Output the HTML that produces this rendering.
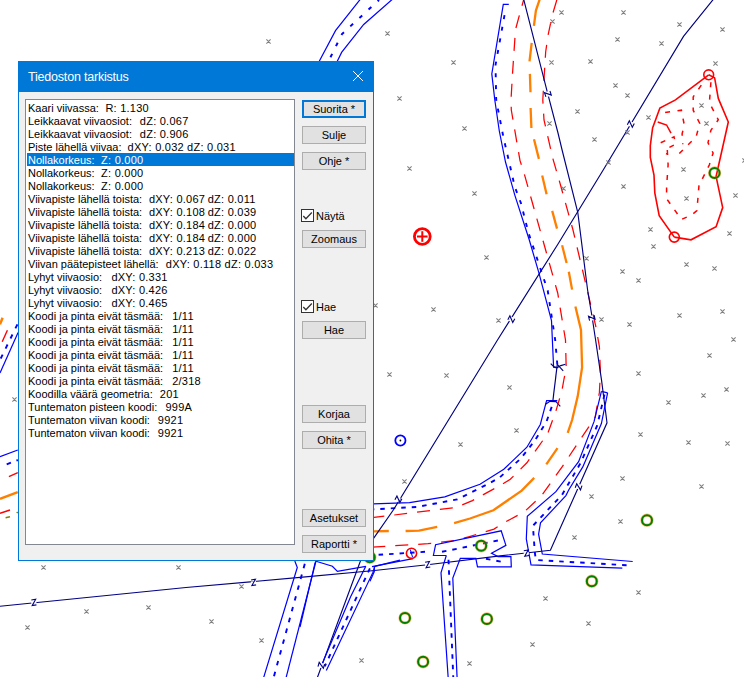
<!DOCTYPE html>
<html><head><meta charset="utf-8">
<style>
html,body{margin:0;padding:0;width:744px;height:677px;overflow:hidden;background:#fff;}
body{position:relative;font-family:"Liberation Sans",sans-serif;}
#map{position:absolute;left:0;top:0;}
.dlg{position:absolute;left:18px;top:61px;width:354px;height:498px;border:1px solid #0078d7;background:#f0f0f0;}
.tb{position:absolute;left:0;top:0;width:354px;height:30px;background:#0078d7;}
.tt{position:absolute;left:9px;top:8px;color:#fff;font-size:12.5px;letter-spacing:-0.2px;white-space:pre;}
.lb{position:absolute;left:6px;top:37px;width:268px;height:444px;border:1px solid #828790;background:#fff;}
.row{position:absolute;left:1px;height:13px;width:266px;font-size:11px;line-height:13px;white-space:pre;color:#000;}
.row span{position:absolute;top:1px;margin-left:1px;}
.row span+span{letter-spacing:.25px;}
.sel{background:#0078d7;color:#fff;width:267px;}
.btn{position:absolute;left:283px;width:62px;height:16px;border:1px solid #adadad;background:#e1e1e1;font-size:11px;line-height:16px;text-align:center;color:#000;white-space:pre;}
.btn.def{border:2px solid #0078d7;width:60px;height:14px;line-height:14px;}
.cb{position:absolute;left:282px;width:11px;height:11px;border:1px solid #333;background:#fff;}
.cbl{position:absolute;left:297px;font-size:11px;line-height:13px;color:#000;}
</style></head><body>
<svg id="map" width="744" height="677" viewBox="0 0 744 677">
<path d="M361.3 -2.0 L335.5 30.6 L319.4 61.0 L300.0 100.0" stroke="#0000ff" stroke-width="1.2" fill="none"/>
<path d="M392.7 -1.0 L363.7 24.5 L341.6 52.4 L337.4 61.0 L330.0 80.0" stroke="#0000ff" stroke-width="1.2" fill="none"/>
<path d="M379.0 0.0 L342.0 34.0 L330.6 57.0 L320.0 80.0" stroke="#0000ff" stroke-width="2" fill="none" stroke-dasharray="3.8 8.6" stroke-dashoffset="2"/>
<path d="M18.1 332.5 L0.0 373.0" stroke="#0000ff" stroke-width="1.2" fill="none"/>
<path d="M17.4 324.4 L0.0 360.0" stroke="#0000ff" stroke-width="1.9" fill="none" stroke-dasharray="4.5 6.7"/>
<path d="M7.4 330.3 L2.2 341.7" stroke="#ff0000" stroke-width="1.4" fill="none"/>
<path d="M2.6 317.7 L0.0 324.4" stroke="#ff8000" stroke-width="2.5" fill="none"/>
<path d="M508.8 4.4 L503.3 4.4 L491.8 73.9 L494.8 100.0 L499.3 131.0 L505.5 162.0 L514.8 195.1 L529.3 240.0 L538.9 272.9 L551.5 320.6 L553.6 367.3 L557.3 368.0" stroke="#0000ff" stroke-width="1.2" fill="none"/>
<path d="M505.0 12.5 L495.5 65.0 L496.2 100.0 L503.4 137.2 L509.6 164.1 L514.8 186.9 L521.0 203.3 L528.3 232.3 L547.7 290.5 L555.2 340.0 L557.3 364.3" stroke="#0000ff" stroke-width="1.9" fill="none" stroke-dasharray="4 7.8" stroke-dashoffset="-2.7"/>
<path d="M557.3 400.6 L546.6 400.6 L540.3 424.5 L526.9 447.2 L503.8 469.3 L480.0 484.3 L444.8 496.9 L409.6 502.7 L373.3 503.9" stroke="#0000ff" stroke-width="1.2" fill="none"/>
<path d="M551.7 406.9 L546.6 421.4 L535.2 440.0 L520.7 458.6 L500.0 477.2 L490.0 483.0 L457.3 499.4 L417.2 506.9 L372.0 509.4" stroke="#0000ff" stroke-width="1.9" fill="none" stroke-dasharray="4.5 6"/>
<path d="M557.3 364.3 L552.9 400.5" stroke="#000080" stroke-width="1.2" fill="none"/>
<path d="M550.7 363.6 L553.6 366.5 L557.3 367.6 L560.8 365.6 L565.5 364.3" stroke="#000080" stroke-width="1.1" fill="none"/>
<path d="M557.3 364.3 L563.2 370.9" stroke="#000080" stroke-width="1.1" fill="none"/>
<path d="M545.5 404.2 L550.0 401.4 L556.0 401.6 L560.3 406.4" stroke="#000080" stroke-width="1.1" fill="none"/>
<path d="M0.0 456.7 L17.8 450.0" stroke="#0000ff" stroke-width="1.2" fill="none"/>
<path d="M6.7 464.4 L17.8 460.0" stroke="#0000ff" stroke-width="1.9" fill="none" stroke-dasharray="4.5 6"/>
<path d="M8.9 476.7 L17.8 472.7" stroke="#ff0000" stroke-width="1.4" fill="none"/>
<path d="M0.0 498.9 L17.8 492.2" stroke="#ff8000" stroke-width="2.5" fill="none"/>
<path d="M0.0 513.3 L10.0 510.0" stroke="#ff0000" stroke-width="1.4" fill="none"/>
<path d="M5.6 517.8 L10.0 516.7" stroke="#808000" stroke-width="1.4" fill="none"/>
<path d="M16.7 512.0 L17.8 513.0" stroke="#808000" stroke-width="1.4" fill="none"/>
<path d="M523.6 0.0 L515.5 29.5 L512.5 73.9 L511.0 100.0 L511.3 110.0 L520.0 160.6 L523.9 172.5 L557.7 293.0 L565.5 340.0 L566.2 368.7 L564.0 379.0 L562.0 390.3 L555.9 411.0 L547.6 433.8 L537.2 448.3 L526.9 462.8 L510.3 479.3 L500.0 485.5 L472.4 500.6 L455.9 507.5 L372.0 517.7" stroke="#ff0000" stroke-width="1.25" fill="none" stroke-dasharray="13 10" stroke-dashoffset="7"/>
<path d="M556.8 0.0 L552.4 14.8 L548.0 35.5 L545.7 51.7 L544.3 73.9 L542.8 100.0 L544.0 120.0 L552.7 158.0 L560.5 185.0 L573.0 230.0 L595.7 325.9 L599.4 346.6 L600.4 372.6 L599.4 392.4 L595.2 417.2 L578.6 442.1 L562.1 466.9 L541.4 495.9 L524.5 511.6 L501.2 524.3 L494.0 529.1 L468.6 536.8 L456.0 540.4 L428.0 543.7 L376.5 546.9 L372.0 547.2" stroke="#ff0000" stroke-width="1.25" fill="none" stroke-dasharray="13 10"/>
<path d="M539.8 -1.0 L535.9 10.6 L533.9 25.8 M531.7 42.8 L529.5 61.3 M529.9 73.9 L530.5 92.3 M530.6 108.0 L531.4 128.0 M534.0 139.3 L538.9 158.9 M542.2 175.5 L546.6 194.3 M552.2 210.9 L557.0 228.6 M562.1 245.3 L566.6 263.0 M568.8 271.8 L572.1 289.6 M575.4 306.6 L581.0 329.9 L582.1 367.5 L577.7 396.3 L572.1 420.0 L567.7 432.9 M557.5 448.2 L546.3 464.4 M534.2 477.9 L521.7 490.6 L493.4 510.3 L470.0 518.5 L454.1 523.2 M437.2 526.9 L419.0 530.6 L405.6 531.0 M388.8 531.0 L374.0 531.3 L370.0 531.3" stroke="#ff8000" stroke-width="2.3" fill="none"/>
<path d="M523.6 -1.0 L547.2 91.6 L558.0 133.0 L562.1 150.0 L577.8 212.5 L587.6 290.0 L592.1 317.0 L595.6 340.0 L601.6 380.6 L607.0 422.8 L577.2 490.0 L550.4 550.2 L500.0 555.9 L427.6 564.7 L372.0 570.8 L300.0 577.4 L186.0 587.5 L0.0 606.3" stroke="#000080" stroke-width="1.15" fill="none"/>
<path d="M713.6 -1.0 L683.5 36.4 L603.2 170.0 L558.0 244.0 L497.5 340.0 L393.3 510.0 L372.0 540.6 L360.7 560.2 L317.2 678.0" stroke="#000080" stroke-width="1.15" fill="none"/>
<path d="M601.4 391.4 L607.6 392.8" stroke="#0000ff" stroke-width="1.2" fill="none"/>
<path d="M601.4 391.4 L594.1 421.4 L578.6 461.7 L555.9 491.7 L527.3 516.3 L526.3 538.9 L531.0 564.9 L622.3 568.1" stroke="#0000ff" stroke-width="1.2" fill="none"/>
<path d="M607.6 392.8 L601.4 423.5 L582.8 466.9 L568.7 490.0 L565.9 495.6 L540.5 522.9 L538.6 534.2 L542.3 554.0 L632.7 561.5" stroke="#0000ff" stroke-width="1.2" fill="none"/>
<path d="M604.5 394.5 L597.2 425.5 L580.7 462.8 L562.1 494.7 L532.9 525.8 L534.8 552.1 L535.8 560.0 L628.0 565.3" stroke="#0000ff" stroke-width="1.9" fill="none" stroke-dasharray="4.5 6"/>
<path d="M446.3 555.5 L433.4 555.5 L435.6 544.7 L501.2 530.8 L505.9 545.4 L491.5 553.3 L498.0 556.6 L510.9 556.6 L511.3 566.9 L477.5 566.9 L475.8 558.3 L460.3 558.3 L452.8 578.1 L457.1 678.0" stroke="#0000ff" stroke-width="1.2" fill="none"/>
<path d="M446.3 555.5 L441.0 572.7 L448.2 678.0" stroke="#0000ff" stroke-width="1.2" fill="none"/>
<path d="M442.0 551.8 L501.2 539.8" stroke="#0000ff" stroke-width="1.9" fill="none" stroke-dasharray="4.5 6"/>
<path d="M448.5 559.8 L453.3 678.0" stroke="#0000ff" stroke-width="1.9" fill="none" stroke-dasharray="4.5 6"/>
<path d="M486.0 558.7 L502.3 561.9" stroke="#0000ff" stroke-width="1.9" fill="none" stroke-dasharray="4.5 6"/>
<path d="M378.6 554.8 L430.0 551.5" stroke="#0000ff" stroke-width="1.9" fill="none" stroke-dasharray="4.5 6"/>
<path d="M372.0 566.6 L413.0 558.7" stroke="#0000ff" stroke-width="1.2" fill="none"/>
<path d="M374.3 566.2 L374.3 571.6 L370.0 581.3" stroke="#0000ff" stroke-width="1.2" fill="none"/>
<path d="M294.8 561.0 L297.3 567.5 L263.5 678.0" stroke="#0000ff" stroke-width="1.2" fill="none"/>
<path d="M316.0 561.0 L286.0 678.0" stroke="#0000ff" stroke-width="1.2" fill="none"/>
<path d="M304.8 563.8 L273.5 678.0" stroke="#0000ff" stroke-width="1.9" fill="none" stroke-dasharray="4.5 6.7"/>
<path d="M315.2 561.0 L332.4 566.3 L337.4 571.4 L365.8 566.3" stroke="#0000ff" stroke-width="1.2" fill="none"/>
<path d="M365.8 566.3 L350.6 596.7 L322.3 663.5" stroke="#0000ff" stroke-width="1.2" fill="none"/>
<path d="M374.9 566.3 L372.9 572.4 L326.3 670.6" stroke="#0000ff" stroke-width="1.2" fill="none"/>
<path d="M369.9 568.3 L324.8 666.3" stroke="#0000ff" stroke-width="1.9" fill="none" stroke-dasharray="4.5 6"/>
<path d="M374.9 566.3 L400.0 560.2" stroke="#0000ff" stroke-width="1.2" fill="none"/>
<path d="M315.2 562.3 L300.0 627.0" stroke="#0000ff" stroke-width="1.2" fill="none"/>
<path d="M708.7 74.8 L675.5 99.9 L659.9 108.0 L652.6 128.0 L650.3 145.7 L650.3 157.4 L654.0 175.1 L654.8 192.8 L659.2 215.7 L674.3 237.1" stroke="#ff0000" stroke-width="1.6" fill="none"/>
<path d="M674.3 237.1 L691.0 239.8 L716.1 226.8 L722.7 207.6 L716.1 176.6 L728.3 122.0 L718.3 98.4 L714.6 77.7 L708.7 74.8" stroke="#ff0000" stroke-width="1.6" fill="none"/>
<path d="M710.9 82.2 L709.4 102.8 L718.3 119.8 L710.9 130.2 L708.0 142.7 L713.1 153.0 L709.4 164.8 L702.0 179.5 L699.1 184.0 L696.9 210.6 L691.7 215.0 L681.4 219.4 L674.0 209.1 L666.6 198.7 L666.6 186.9 L668.1 164.8 L667.3 150.0" stroke="#ff0000" stroke-width="1.5" fill="none" stroke-dasharray="5 7.5"/>
<path d="M701.3 85.1 L693.2 96.9 L693.2 110.2 L699.8 123.5 L696.1 136.8 L685.8 147.1 L678.4 154.5" stroke="#ff0000" stroke-width="1.5" fill="none" stroke-dasharray="5 7.5"/>
<path d="M665.1 112.4 L681.4 110.2 L684.3 125.0 L682.1 133.9 L682.8 144.2" stroke="#ff0000" stroke-width="1.5" fill="none" stroke-dasharray="5 7.5"/>
<path d="M657.7 122.0 L666.6 125.0 L671.0 133.1" stroke="#ff0000" stroke-width="1.5" fill="none"/>
<path d="M660.7 142.7 L674.0 136.8 L675.5 144.2 L667.3 148.6 L666.6 154.5" stroke="#ff0000" stroke-width="1.5" fill="none" stroke-dasharray="5 7"/>
<circle cx="708.7" cy="74.8" r="4.9" stroke="#ff0000" stroke-width="1.6" fill="none"/>
<circle cx="674.3" cy="237.1" r="5.0" stroke="#ff0000" stroke-width="1.6" fill="none"/>
<circle cx="411.5" cy="553.3" r="5.1" stroke="#ff0000" stroke-width="1.6" fill="none"/>
<path d="M410.3 549.5 L412.5 557.0" stroke="#0000ff" stroke-width="1" fill="none"/>
<circle cx="422.3" cy="236.5" r="7.9" stroke="#ff0000" stroke-width="2.8" fill="none"/>
<path d="M417.0 236.5 L427.6 236.5" stroke="#ff0000" stroke-width="2" fill="none"/>
<path d="M422.3 231.2 L422.3 241.8" stroke="#ff0000" stroke-width="2" fill="none"/>
<circle cx="400.4" cy="440.5" r="5.1" stroke="#0000ff" stroke-width="1.8" fill="none"/>
<circle cx="400.4" cy="440.5" r="0.9" stroke="#000" stroke-width="0" fill="#000"/>
<circle cx="714.6" cy="172.9" r="5.0" stroke="#ff8000" stroke-width="3.3" fill="none" opacity="0.55"/>
<circle cx="714.6" cy="172.9" r="5.0" stroke="#008000" stroke-width="2.0" fill="none"/>
<circle cx="481.2" cy="545.8" r="5.0" stroke="#ff8000" stroke-width="3.3" fill="none" opacity="0.55"/>
<circle cx="481.2" cy="545.8" r="5.0" stroke="#008000" stroke-width="2.0" fill="none"/>
<circle cx="369.8" cy="557.2" r="5.0" stroke="#ff8000" stroke-width="3.3" fill="none" opacity="0.55"/>
<circle cx="369.8" cy="557.2" r="5.0" stroke="#008000" stroke-width="2.0" fill="none"/>
<circle cx="405.0" cy="617.9" r="5.0" stroke="#ff8000" stroke-width="3.3" fill="none" opacity="0.55"/>
<circle cx="405.0" cy="617.9" r="5.0" stroke="#008000" stroke-width="2.0" fill="none"/>
<circle cx="486.9" cy="618.9" r="5.0" stroke="#ff8000" stroke-width="3.3" fill="none" opacity="0.55"/>
<circle cx="486.9" cy="618.9" r="5.0" stroke="#008000" stroke-width="2.0" fill="none"/>
<circle cx="423.1" cy="661.8" r="5.0" stroke="#ff8000" stroke-width="3.3" fill="none" opacity="0.55"/>
<circle cx="423.1" cy="661.8" r="5.0" stroke="#008000" stroke-width="2.0" fill="none"/>
<circle cx="647.0" cy="520.2" r="5.0" stroke="#ff8000" stroke-width="3.3" fill="none" opacity="0.55"/>
<circle cx="647.0" cy="520.2" r="5.0" stroke="#008000" stroke-width="2.0" fill="none"/>
<circle cx="591.8" cy="581.2" r="5.0" stroke="#ff8000" stroke-width="3.3" fill="none" opacity="0.55"/>
<circle cx="591.8" cy="581.2" r="5.0" stroke="#008000" stroke-width="2.0" fill="none"/>
<path d="M266.4 39.4L270.6 43.6M266.4 43.6L270.6 39.4M385.4 31.4L389.6 35.6M385.4 35.6L389.6 31.4M451.4 60.4L455.6 64.6M451.4 64.6L455.6 60.4M397.4 96.4L401.6 100.6M397.4 100.6L401.6 96.4M462.4 126.4L466.6 130.6M462.4 130.6L466.6 126.4M407.4 166.4L411.6 170.6M407.4 170.6L411.6 166.4M559.4 10.4L563.6 14.6M559.4 14.6L563.6 10.4M550.4 19.4L554.6 23.6M550.4 23.6L554.6 19.4M549.4 60.4L553.6 64.6M549.4 64.6L553.6 60.4M547.4 121.4L551.6 125.6M547.4 125.6L551.6 121.4M621.4 10.4L625.6 14.6M621.4 14.6L625.6 10.4M677.4 22.4L681.6 26.6M677.4 26.6L681.6 22.4M720.4 27.4L724.6 31.6M720.4 31.6L724.6 27.4M615.4 37.4L619.6 41.6M615.4 41.6L619.6 37.4M659.4 41.4L663.6 45.6M659.4 45.6L663.6 41.4M588.4 59.4L592.6 63.6M588.4 63.6L592.6 59.4M713.4 61.4L717.6 65.6M713.4 65.6L717.6 61.4M613.4 83.4L617.6 87.6M613.4 87.6L617.6 83.4M625.4 93.4L629.6 97.6M625.4 97.6L629.6 93.4M575.4 109.4L579.6 113.6M575.4 113.6L579.6 109.4M646.4 115.4L650.6 119.6M646.4 119.6L650.6 115.4M699.4 103.4L703.6 107.6M699.4 107.6L703.6 103.4M704.4 121.4L708.6 125.6M704.4 125.6L708.6 121.4M625.4 130.4L629.6 134.6M625.4 134.6L629.6 130.4M592.4 137.4L596.6 141.6M592.4 141.6L596.6 137.4M606.4 160.4L610.6 164.6M606.4 164.6L610.6 160.4M681.4 167.4L685.6 171.6M681.4 171.6L685.6 167.4M684.4 196.4L688.6 200.6M684.4 200.6L688.6 196.4M733.4 193.4L737.6 197.6M733.4 197.6L737.6 193.4M648.4 227.4L652.6 231.6M648.4 231.6L652.6 227.4M651.4 244.4L655.6 248.6M651.4 248.6L655.6 244.4M727.4 231.4L731.6 235.6M727.4 235.6L731.6 231.4M472.4 191.4L476.6 195.6M472.4 195.6L476.6 191.4M484.4 255.4L488.6 259.6M484.4 259.6L488.6 255.4M373.4 303.4L377.6 307.6M373.4 307.6L377.6 303.4M431.4 307.4L435.6 311.6M431.4 311.6L435.6 307.4M496.4 318.4L500.6 322.6M496.4 322.6L500.6 318.4M561.4 186.4L565.6 190.6M561.4 190.6L565.6 186.4M621.4 184.4L625.6 188.6M621.4 188.6L625.6 184.4M584.4 256.4L588.6 260.6M584.4 260.6L588.6 256.4M684.4 262.4L688.6 266.6M684.4 266.6L688.6 262.4M712.4 266.4L716.6 270.6M712.4 270.6L716.6 266.4M620.4 269.4L624.6 273.6M620.4 273.6L624.6 269.4M636.4 278.4L640.6 282.6M636.4 282.6L640.6 278.4M599.4 317.4L603.6 321.6M599.4 321.6L603.6 317.4M627.4 322.4L631.6 326.6M627.4 326.6L631.6 322.4M677.4 313.4L681.6 317.6M677.4 317.6L681.6 313.4M720.4 309.4L724.6 313.6M720.4 313.6L724.6 309.4M731.4 337.4L735.6 341.6M731.4 341.6L735.6 337.4M387.4 372.4L391.6 376.6M387.4 376.6L391.6 372.4M444.4 373.4L448.6 377.6M444.4 377.6L448.6 373.4M507.4 385.4L511.6 389.6M507.4 389.6L511.6 385.4M514.4 428.4L518.6 432.6M514.4 432.6L518.6 428.4M458.4 442.4L462.6 446.6M458.4 446.6L462.6 442.4M402.4 479.4L406.6 483.6M402.4 483.6L406.6 479.4M707.4 353.4L711.6 357.6M707.4 357.6L711.6 353.4M636.4 371.4L640.6 375.6M636.4 375.6L640.6 371.4M724.4 387.4L728.6 391.6M724.4 391.6L728.6 387.4M701.4 393.4L705.6 397.6M701.4 397.6L705.6 393.4M666.4 400.4L670.6 404.6M666.4 404.6L670.6 400.4M638.4 432.4L642.6 436.6M638.4 436.6L642.6 432.4M686.4 440.4L690.6 444.6M686.4 444.6L690.6 440.4M725.4 441.4L729.6 445.6M725.4 445.6L729.6 441.4M620.4 476.4L624.6 480.6M620.4 480.6L624.6 476.4M699.4 484.4L703.6 488.6M699.4 488.6L703.6 484.4M589.4 494.4L593.6 498.6M589.4 498.6L593.6 494.4M618.4 519.4L622.6 523.6M618.4 523.6L622.6 519.4M572.4 535.4L576.6 539.6M572.4 539.6L576.6 535.4M636.4 590.4L640.6 594.6M636.4 594.6L640.6 590.4M586.4 621.4L590.6 625.6M586.4 625.6L590.6 621.4M543.4 596.4L547.6 600.6M543.4 600.6L547.6 596.4M530.4 642.4L534.6 646.6M530.4 646.6L534.6 642.4M467.4 661.4L471.6 665.6M467.4 665.6L471.6 661.4M41.4 565.4L45.6 569.6M41.4 569.6L45.6 565.4M176.4 565.4L180.6 569.6M176.4 569.6L180.6 565.4M84.4 609.4L88.6 613.6M84.4 613.6L88.6 609.4M146.4 605.4L150.6 609.6M146.4 609.6L150.6 605.4M25.4 625.4L29.6 629.6M25.4 629.6L29.6 625.4M239.4 584.4L243.6 588.6M239.4 588.6L243.6 584.4M209.4 619.4L213.6 623.6M209.4 623.6L213.6 619.4M259.4 638.4L263.6 642.6M259.4 642.6L263.6 638.4M359.4 658.4L363.6 662.6M359.4 662.6L363.6 658.4M12.4 397.4L16.6 401.6M12.4 401.6L16.6 397.4M742.4 158.4L746.6 162.6M742.4 162.6L746.6 158.4" stroke="#808080" stroke-width="1.1" fill="none"/>
<g transform="translate(548.0 94.0) rotate(-104.6) scale(0.85)"><rect x="-3" y="-1.5" width="6" height="3" fill="#fff"/><path d="M-2.6 -3.2 L2.6 -3.6 L-2.2 3.4 L2.8 3.1" stroke="#000080" stroke-width="1.3" fill="none"/></g>
<g transform="translate(591.9 318.0) rotate(-99.6) scale(0.85)"><rect x="-3" y="-1.5" width="6" height="3" fill="#fff"/><path d="M-2.6 -3.2 L2.6 -3.6 L-2.2 3.4 L2.8 3.1" stroke="#000080" stroke-width="1.3" fill="none"/></g>
<g transform="translate(578.6 486.6) rotate(113.9) scale(0.85)"><rect x="-3" y="-1.5" width="6" height="3" fill="#fff"/><path d="M-2.6 -3.2 L2.6 -3.6 L-2.2 3.4 L2.8 3.1" stroke="#000080" stroke-width="1.3" fill="none"/></g>
<g transform="translate(630.8 124.2) rotate(-59.0) scale(0.85)"><rect x="-3" y="-1.5" width="6" height="3" fill="#fff"/><path d="M-2.6 -3.2 L2.6 -3.6 L-2.2 3.4 L2.8 3.1" stroke="#000080" stroke-width="1.3" fill="none"/></g>
<g transform="translate(511.3 319.3) rotate(-57.8) scale(0.85)"><rect x="-3" y="-1.5" width="6" height="3" fill="#fff"/><path d="M-2.6 -3.2 L2.6 -3.6 L-2.2 3.4 L2.8 3.1" stroke="#000080" stroke-width="1.3" fill="none"/></g>
<g transform="translate(398.4 499.4) rotate(-58.5) scale(0.85)"><rect x="-3" y="-1.5" width="6" height="3" fill="#fff"/><path d="M-2.6 -3.2 L2.6 -3.6 L-2.2 3.4 L2.8 3.1" stroke="#000080" stroke-width="1.3" fill="none"/></g>
<g transform="translate(321.3 665.5) rotate(-69.7) scale(0.85)"><rect x="-3" y="-1.5" width="6" height="3" fill="#fff"/><path d="M-2.6 -3.2 L2.6 -3.6 L-2.2 3.4 L2.8 3.1" stroke="#000080" stroke-width="1.3" fill="none"/></g>
<g transform="translate(33.8 602.5) rotate(-5.8) scale(0.85)"><rect x="-3" y="-1.5" width="6" height="3" fill="#fff"/><path d="M-2.6 -3.2 L2.6 -3.6 L-2.2 3.4 L2.8 3.1" stroke="#000080" stroke-width="1.3" fill="none"/></g>
<g transform="translate(253.5 582.5) rotate(-5.1) scale(0.85)"><rect x="-3" y="-1.5" width="6" height="3" fill="#fff"/><path d="M-2.6 -3.2 L2.6 -3.6 L-2.2 3.4 L2.8 3.1" stroke="#000080" stroke-width="1.3" fill="none"/></g>
<g transform="translate(427.6 564.7) rotate(-6.6) scale(0.85)"><rect x="-3" y="-1.5" width="6" height="3" fill="#fff"/><path d="M-2.6 -3.2 L2.6 -3.6 L-2.2 3.4 L2.8 3.1" stroke="#000080" stroke-width="1.3" fill="none"/></g>
<g transform="translate(526.3 553.2) rotate(-6.5) scale(0.85)"><rect x="-3" y="-1.5" width="6" height="3" fill="#fff"/><path d="M-2.6 -3.2 L2.6 -3.6 L-2.2 3.4 L2.8 3.1" stroke="#000080" stroke-width="1.3" fill="none"/></g>
</svg>
<div class="dlg">
 <div class="tb"><div class="tt">Tiedoston tarkistus</div>
  <svg style="position:absolute;left:333px;top:8px" width="12" height="12"><path d="M1 1L11 11M11 1L1 11" stroke="#fff" stroke-width="1"/></svg>
 </div>
 <div class="lb">
  <div class="row" style="top:1px"><span style="left:0">Kaari viivassa:</span><span style="left:77.4px">R: 1.130</span></div>
  <div class="row" style="top:14px"><span style="left:0">Leikkaavat viivaosiot:</span><span style="left:111.8px">dZ: 0.067</span></div>
  <div class="row" style="top:27px"><span style="left:0">Leikkaavat viivaosiot:</span><span style="left:111.8px">dZ: 0.906</span></div>
  <div class="row" style="top:40px"><span style="left:0">Piste lähellä viivaa:</span><span style="left:99.6px">dXY: 0.032</span><span style="left:159.1px">dZ: 0.031</span></div>
  <div class="row sel" style="top:53px"><span style="left:0">Nollakorkeus:</span><span style="left:73.1px">Z: 0.000</span></div>
  <div class="row" style="top:66px"><span style="left:0">Nollakorkeus:</span><span style="left:73.1px">Z: 0.000</span></div>
  <div class="row" style="top:79px"><span style="left:0">Nollakorkeus:</span><span style="left:73.1px">Z: 0.000</span></div>
  <div class="row" style="top:92px"><span style="left:0">Viivapiste lähellä toista:</span><span style="left:120.9px">dXY: 0.067</span><span style="left:179.7px">dZ: 0.011</span></div>
  <div class="row" style="top:105px"><span style="left:0">Viivapiste lähellä toista:</span><span style="left:120.9px">dXY: 0.108</span><span style="left:179.7px">dZ: 0.039</span></div>
  <div class="row" style="top:118px"><span style="left:0">Viivapiste lähellä toista:</span><span style="left:120.9px">dXY: 0.184</span><span style="left:179.7px">dZ: 0.000</span></div>
  <div class="row" style="top:131px"><span style="left:0">Viivapiste lähellä toista:</span><span style="left:120.9px">dXY: 0.184</span><span style="left:179.7px">dZ: 0.000</span></div>
  <div class="row" style="top:144px"><span style="left:0">Viivapiste lähellä toista:</span><span style="left:120.9px">dXY: 0.213</span><span style="left:179.7px">dZ: 0.022</span></div>
  <div class="row" style="top:157px"><span style="left:0">Viivan päätepisteet lähellä:</span><span style="left:137.8px">dXY: 0.118</span><span style="left:196.6px">dZ: 0.033</span></div>
  <div class="row" style="top:170px"><span style="left:0">Lyhyt viivaosio:</span><span style="left:83.4px">dXY: 0.331</span></div>
  <div class="row" style="top:183px"><span style="left:0">Lyhyt viivaosio:</span><span style="left:83.4px">dXY: 0.426</span></div>
  <div class="row" style="top:196px"><span style="left:0">Lyhyt viivaosio:</span><span style="left:83.4px">dXY: 0.465</span></div>
  <div class="row" style="top:209px"><span style="left:0">Koodi ja pinta eivät täsmää:</span><span style="left:144.2px">1/11</span></div>
  <div class="row" style="top:222px"><span style="left:0">Koodi ja pinta eivät täsmää:</span><span style="left:144.2px">1/11</span></div>
  <div class="row" style="top:235px"><span style="left:0">Koodi ja pinta eivät täsmää:</span><span style="left:144.2px">1/11</span></div>
  <div class="row" style="top:248px"><span style="left:0">Koodi ja pinta eivät täsmää:</span><span style="left:144.2px">1/11</span></div>
  <div class="row" style="top:261px"><span style="left:0">Koodi ja pinta eivät täsmää:</span><span style="left:144.2px">1/11</span></div>
  <div class="row" style="top:274px"><span style="left:0">Koodi ja pinta eivät täsmää:</span><span style="left:144.2px">2/318</span></div>
  <div class="row" style="top:287px"><span style="left:0">Koodilla väärä geometria:</span><span style="left:131.8px">201</span></div>
  <div class="row" style="top:300px"><span style="left:0">Tuntematon pisteen koodi:</span><span style="left:137.5px">999A</span></div>
  <div class="row" style="top:313px"><span style="left:0">Tuntematon viivan koodi:</span><span style="left:129.8px">9921</span></div>
  <div class="row" style="top:326px"><span style="left:0">Tuntematon viivan koodi:</span><span style="left:129.8px">9921</span></div>
 </div>
 <div class="btn def" style="top:38px">Suorita *</div>
 <div class="btn" style="top:64px">Sulje</div>
 <div class="btn" style="top:90px">Ohje *</div>
 <div class="cb" style="top:147px"><svg width="11" height="11" style="position:absolute;left:0;top:0"><path d="M1.3 6L3.9 8.7L9.8 2.5" stroke="#333" stroke-width="1.3" fill="none"/></svg></div><div class="cbl" style="top:148px">Näytä</div>
 <div class="btn" style="top:168px">Zoomaus</div>
 <div class="cb" style="top:238px"><svg width="11" height="11" style="position:absolute;left:0;top:0"><path d="M1.3 6L3.9 8.7L9.8 2.5" stroke="#333" stroke-width="1.3" fill="none"/></svg></div><div class="cbl" style="top:239px">Hae</div>
 <div class="btn" style="top:259px">Hae</div>
 <div class="btn" style="top:343px">Korjaa</div>
 <div class="btn" style="top:369px">Ohita *</div>
 <div class="btn" style="top:447px">Asetukset</div>
 <div class="btn" style="top:473px">Raportti *</div>
</div>
</body></html>
